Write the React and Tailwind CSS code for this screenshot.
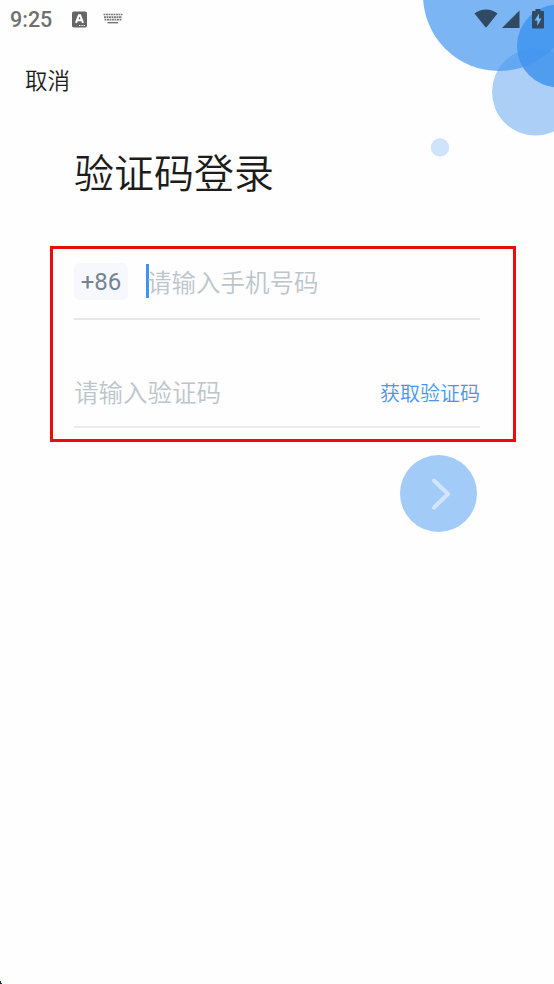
import React, { useState } from 'react';

const Bubbles = () => (
    <svg className="absolute top-0 right-0 pointer-events-none" width="140" height="165" viewBox="414 0 140 165">
        <circle cx="499" cy="-5" r="76" fill="#7bb5f4" />
        <circle cx="535.5" cy="92" r="43.5" fill="#4a98ee" fillOpacity="0.46" />
        <circle cx="558.5" cy="46" r="41.5" fill="#4094ee" fillOpacity="0.85" />
        <circle cx="440" cy="147.500" r="9.300" fill="#cfe4fb" />
    </svg>
);

const StatusBar = () => (
    <div className="relative flex h-[38px] items-center pl-[10px] pr-[10px]">
        <span className="w-[61px] pt-[1px] font-['Roboto',sans-serif] text-[21.500px] leading-none font-medium text-[#707070]">9:25</span>
        <svg width="16" height="17" viewBox="0 0 16 17" className="mr-[16px]">
            <rect x="1" y="0.500" width="15" height="16" rx="1.800" fill="#666" />
            <path d="M5 11.800 7.900 4.200h1.200l2.900 7.600M6.300 9.200h4.400" fill="none" stroke="#fff" strokeWidth="2.100" />
            <path d="M8 14.500h1.300M10.300 14.500h1.300M12.600 14.500h1.300" stroke="#fff" strokeWidth="1.200" />
        </svg>
        <svg width="20" height="12" viewBox="0 0 20 12">
            <path d="M0.500 1.500h19M1 4.100h18M1.500 6.700h17" stroke="#777" strokeWidth="1.700" strokeDasharray="1.900 0.600" />
            <path d="M4.500 9.700h10.500" stroke="#777" strokeWidth="1.400" />
        </svg>
        <div className="ml-auto flex items-center pb-[1px] text-[#2f4a62]">
            <svg width="24" height="19" viewBox="0 0 24 19" fill="currentColor">
                <path d="M0.500 4.500C7.500 -1 16.500 -1 23.500 4.500L12.700 18Q12 18.700 11.300 18Z" />
            </svg>
            <svg width="18" height="18" viewBox="0 0 18 18" fill="currentColor" className="ml-[4px]">
                <path d="M17.500 0.500V18H0Z" />
            </svg>
            <svg width="12" height="20" viewBox="0 0 12 20" className="ml-[12px]">
                <path d="M3.500 0h5v2H11a1 1 0 0 1 1 1v15.500a1 1 0 0 1-1 1H1a1 1 0 0 1-1-1V3a1 1 0 0 1 1-1h2.500Z" fill="currentColor" />
                <path d="M7 4.500 2.500 11.500H5.300V17L9.500 9.500H7Z" fill="#7bb5f4" />
            </svg>
        </div>
    </div>
);

const App = () => {
    const [phone, setPhone] = useState('');
    const [code, setCode] = useState('');

    return (
        <div className="relative h-[984px] w-[554px] overflow-hidden bg-[#fefefe] font-['Noto_Sans_CJK_SC',sans-serif] font-[350]">
            <Bubbles />
            <StatusBar />

            <button className="relative mt-[24px] ml-[25px] block h-[34px] text-[22.500px] leading-[34px] text-[#1c1c1c]">取消</button>
            <h1 className="mt-[45px] ml-[74px] h-[60px] text-[40px] leading-[60px] font-[350] text-[#1c1c1c]">验证码登录</h1>

            <form className="mt-[45px] ml-[50px] h-[196px] w-[466px] border-[3px] border-[#ea0b0b] pr-[33px] pl-[21px]">
                <div className="flex h-[71px] items-center border-b-2 border-[#e6e7e8] pb-[4px]">
                    <span className="flex h-[37px] w-[54px] items-center justify-center rounded-md bg-[#f7f8fd] pt-[1px] font-['Roboto',sans-serif] text-[24px] font-normal text-[#748393]">+86</span>
                    <span className="mb-[1px] ml-[18px] h-[34px] w-[3px] bg-[#4094ee]" />
                    <input
                        type="tel"
                        value={phone}
                        onChange={(e) => setPhone(e.target.value)}
                        placeholder="请输入手机号码"
                        className="mt-[2px] -ml-[2px] h-[36px] min-w-0 flex-1 bg-transparent text-[24.500px] font-[350] outline-none placeholder:text-[#bcc5cb]"
                    />
                </div>
                <div className="mt-[36px] flex h-[72px] items-center border-b-2 border-[#ececed]">
                    <input
                        type="text"
                        value={code}
                        onChange={(e) => setCode(e.target.value)}
                        placeholder="请输入验证码"
                        className="mt-[3px] h-[36px] min-w-0 flex-1 bg-transparent text-[24.500px] font-[350] outline-none placeholder:text-[#bcc5cb]"
                    />
                    <button type="button" className="mt-[3px] shrink-0 text-[20px] leading-[30px] text-[#4796e9]">获取验证码</button>
                </div>
            </form>

            <button className="mt-[13px] ml-[400px] flex h-[77px] w-[77px] items-center justify-center rounded-full bg-[#a3cbf8]">
                <svg width="20" height="34" viewBox="0 0 20 34" className="ml-[5px]" fill="none" stroke="#d1e6fd" strokeWidth="4" strokeLinecap="round" strokeLinejoin="round">
                    <path d="M3 3.500 17 17 3 30.500" />
                </svg>
            </button>

            {/* dark window corner */}
            <svg className="absolute bottom-0 left-0" width="3" height="3" viewBox="0 0 3 3">
                <path d="M0 0H1V2H2V3H0Z" fill="#12303f" />
            </svg>
        </div>
    );
};

export default App;
